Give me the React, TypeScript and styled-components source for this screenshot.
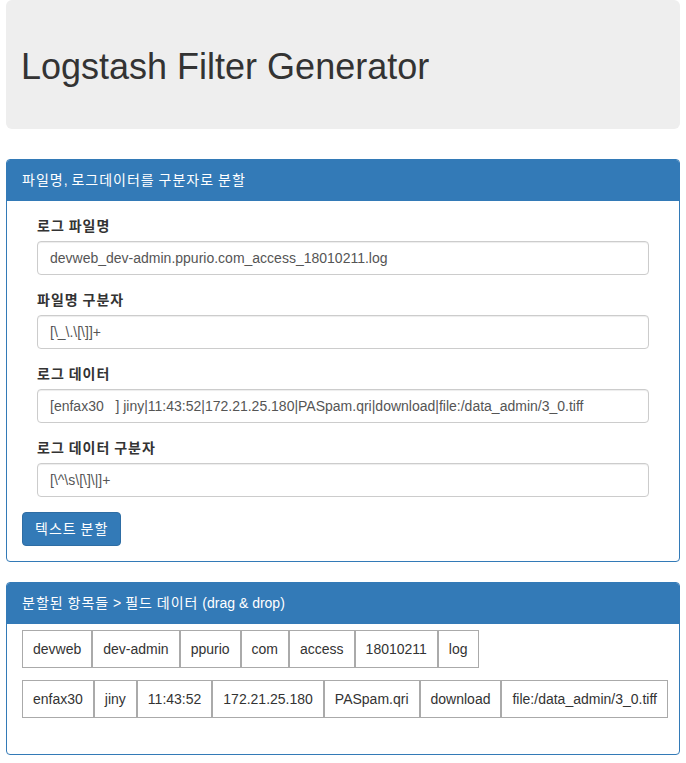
import React from "react";
import styled, { createGlobalStyle } from "styled-components";

const GlobalStyle = createGlobalStyle`
  * { box-sizing: border-box; }
  html, body { margin: 0; padding: 0; background: #fff; }
  body {
    font-family: "Liberation Sans", "Noto Sans CJK KR", Arial, sans-serif;
    font-size: 14px;
    line-height: 20px;
    color: #333;
  }
`;

const Page = styled.div`
  padding: 0 6px;
`;

const Jumbotron = styled.div`
  background: #eeeeee;
  border-radius: 6px;
  height: 129px;
  padding: 47px 15px 0 15px;
  margin-bottom: 30px;
`;

const Title = styled.h1`
  margin: 0;
  font-family: "Liberation Sans", "Noto Sans CJK KR", Arial, sans-serif;
  font-size: 36px;
  font-weight: 400;
  line-height: 40px;
  color: #333;
`;

const Panel = styled.section`
  border: 1px solid #337ab7;
  border-radius: 4px;
  margin-bottom: 20px;
  background: #fff;
`;

const PanelHeading = styled.div`
  background: #337ab7;
  color: #fff;
  padding: 10px 15px;
  border-bottom: 1px solid #337ab7;
  border-radius: 3px 3px 0 0;
  font-size: 14px;
  line-height: 20px;
`;

const PanelBody = styled.div<{ $pt?: number; $pb?: number }>`
  padding: ${(p) => p.$pt ?? 15}px 15px ${(p) => p.$pb ?? 15}px 15px;
`;

const FormGroup = styled.div`
  padding: 0 15px;
  margin-bottom: 15px;
`;

const Label = styled.label`
  display: block;
  font-weight: 700;
  margin-bottom: 5px;
  line-height: 20px;
`;

const Input = styled.input`
  display: block;
  width: 100%;
  height: 34px;
  padding: 6px 12px;
  font-family: "Liberation Sans", "Noto Sans CJK KR", Arial, sans-serif;
  font-size: 14px;
  line-height: 20px;
  color: #555;
  background: #fff;
  border: 1px solid #ccc;
  border-radius: 4px;
  box-shadow: inset 0 1px 1px rgba(0, 0, 0, 0.075);
  outline: none;
`;

const Button = styled.button`
  display: inline-block;
  height: 34px;
  padding: 6px 12px;
  font-family: "Liberation Sans", "Noto Sans CJK KR", Arial, sans-serif;
  font-size: 14px;
  line-height: 20px;
  color: #fff;
  background: #337ab7;
  border: 1px solid #2e6da4;
  border-radius: 4px;
  cursor: pointer;
`;

const Rows = styled.div`
  display: flex;
  flex-direction: column;
  gap: 12px;
`;

const Row = styled.div`
  display: flex;
  flex-wrap: nowrap;
`;

const Cell = styled.div`
  flex: none;
  border: 1px solid #aaa;
  padding: 8px 10px;
  line-height: 20px;
  color: #333;
  background: #fff;
  white-space: nowrap;
`;

/* Hangul runs are set slightly wider, as in the reference's Korean font */
const Hangul = styled.span`
  letter-spacing: 1px;
`;

function Ko({ children }: { children: string }) {
  const parts = children.split(/([\uAC00-\uD7A3]+)/);
  return (
    <>
      {parts.map((p, i) =>
        /[\uAC00-\uD7A3]/.test(p) ? <Hangul key={i}>{p}</Hangul> : <React.Fragment key={i}>{p}</React.Fragment>
      )}
    </>
  );
}

const fields = [
  { label: "로그 파일명", value: "devweb_dev-admin.ppurio.com_access_18010211.log" },
  { label: "파일명 구분자", value: "[\\_\\.\\[\\]]+" },
  {
    label: "로그 데이터",
    value:
      "[enfax30   ] jiny|11:43:52|172.21.25.180|PASpam.qri|download|file:/data_admin/3_0.tiff",
  },
  { label: "로그 데이터 구분자", value: "[\\^\\s\\[\\]\\|]+" },
];

const rows = [
  ["devweb", "dev-admin", "ppurio", "com", "access", "18010211", "log"],
  [
    "enfax30",
    "jiny",
    "11:43:52",
    "172.21.25.180",
    "PASpam.qri",
    "download",
    "file:/data_admin/3_0.tiff",
  ],
];

export default function App() {
  return (
    <>
      <GlobalStyle />
      <Page>
        <Jumbotron>
          <Title>Logstash Filter Generator</Title>
        </Jumbotron>

        <Panel>
          <PanelHeading>
            <Ko>파일명, 로그데이터를 구분자로 분할</Ko>
          </PanelHeading>
          <PanelBody>
            {fields.map((f) => (
              <FormGroup key={f.label}>
                <Label>
                  <Ko>{f.label}</Ko>
                </Label>
                <Input type="text" defaultValue={f.value} />
              </FormGroup>
            ))}
            <Button type="button">
              <Ko>텍스트 분할</Ko>
            </Button>
          </PanelBody>
        </Panel>

        <Panel>
          <PanelHeading>
            <Ko>{"분할된 항목들 > 필드 데이터 (drag & drop)"}</Ko>
          </PanelHeading>
          <PanelBody $pt={6} $pb={36}>
            <Rows>
              {rows.map((r, i) => (
                <Row key={i}>
                  {r.map((c, j) => (
                    <Cell key={j}>{c}</Cell>
                  ))}
                </Row>
              ))}
            </Rows>
          </PanelBody>
        </Panel>
      </Page>
    </>
  );
}
